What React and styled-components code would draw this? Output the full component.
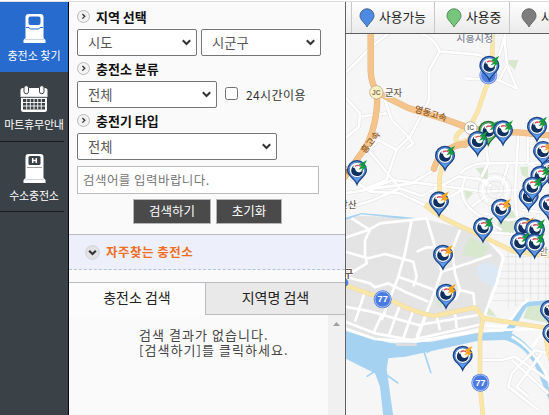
import React from "react";
import styled, { createGlobalStyle } from "styled-components";

const Global = createGlobalStyle`
  * { box-sizing: border-box; }
  body { margin: 0; overflow: hidden; font-family: "Noto Sans CJK KR", "Liberation Sans", sans-serif; }
`;

const Page = styled.div`
  display: grid;
  grid-template-columns: 69px 276px 204px;
  width: 549px;
  height: 415px;
  padding-top: 2px;
  background: linear-gradient(#fff 1px, #dcdcdc 1px, #dcdcdc 2px, #fafafa 2px);
`;

const Sidebar = styled.nav`
  background: #3b4247;
  border-right: 1px solid #07080f;
`;

const NavItem = styled.div`
  height: 70px;
  display: flex;
  flex-direction: column;
  align-items: center;
  padding-top: ${(p) => p.$top}px;
  background: ${(p) => (p.$active ? "#266bcd" : "transparent")};
  svg { display: block; }
  &::after {
    content: "";
    width: 64px;
    height: 1px;
    margin: auto auto 0 0;
    background: ${(p) => (p.$active ? "transparent" : "#171b1e")};
  }
`;

const NavLabel = styled.span`
  color: #fff;
  font-size: 11px;
  line-height: 16px;
  letter-spacing: ${(p) => p.$track || 0}px;
  margin-top: 3px;
  white-space: nowrap;
`;

const Panel = styled.main`
  display: flex;
  flex-direction: column;
  min-width: 0;
  background: #fafafa;
`;

const Form = styled.form`
  height: 232px;
  padding: 5px 0 0 8px;
`;

const Heading = styled.h3`
  display: flex;
  align-items: center;
  gap: 6px;
  height: 20px;
  margin: 0 0 2px;
  font-size: 13px;
  font-weight: 700;
  line-height: 20px;
  color: #111;
  svg { margin-top: -1px; }
`;

const Row = styled.div`
  display: flex;
  align-items: center;
  gap: 4px;
  height: 27px;
  margin-bottom: 3px;
`;

const SelectBox = styled.div`
  display: grid;
  grid-template-columns: 1fr 9px;
  align-items: center;
  width: ${(p) => p.$width}px;
  height: 27px;
  padding: 0 5px 0 10px;
  border: 1px solid #767676;
  border-radius: 2px;
  background: #fff;
  select {
    appearance: none;
    border: 0;
    padding: 0;
    width: 100%;
    height: 22px;
    background: none;
    font: 13.3px "Noto Sans CJK KR", sans-serif;
    color: #555;
  }
`;

const Check = styled.label`
  display: flex;
  align-items: center;
  gap: 8px;
  margin-left: 4px;
  font-size: 12px;
  letter-spacing: 0.4px;
  color: #333;
  input {
    appearance: none;
    width: 13px;
    height: 13px;
    margin: -2px 0 0;
    border: 1px solid #707070;
    border-radius: 2.5px;
    background: #fff;
  }
`;

const Keyword = styled.input`
  display: block;
  width: 242px;
  height: 28px;
  margin-top: 6px;
  padding: 0 6px 2px 5px;
  border: 1px solid #bbb;
  border-radius: 0;
  background: #fff;
  font: 12.5px "Noto Sans CJK KR", sans-serif;
  letter-spacing: 0.45px;
  &::placeholder { color: #757575; opacity: 1; }
`;

const Actions = styled.div`
  display: flex;
  gap: 5px;
  margin: 5px 0 0 56px;
`;

const Button = styled.button`
  width: ${(p) => p.$width}px;
  height: 25px;
  padding: 0 0 2px;
  border: 1px solid #b5b5b5;
  background: #4a4a4a;
  color: #fff;
  font: 12.5px "Noto Sans CJK KR", sans-serif;
`;

const Favorites = styled.div`
  display: flex;
  align-items: center;
  gap: 6px;
  height: 36px;
  padding-left: 16px;
  border-top: 1px solid #b7bdc8;
  border-bottom: 1px dashed #b4c4d8;
  background: #edf0fa;
  color: #ee6e24;
  font-size: 12.5px;
  font-weight: 700;
  letter-spacing: 0.5px;
  span { margin-top: -2px; }
`;

const Tabs = styled.div`
  display: grid;
  grid-template-columns: 137px 1fr;
  height: 33px;
  margin-top: 12px;
  border-top: 1px solid #b9bdc1;
`;

const Tab = styled.div`
  display: flex;
  justify-content: center;
  padding-top: 4px;
  font-size: 14px;
  line-height: 20px;
  color: #222;
  background: ${(p) => (p.$active ? "#fcfcfc" : "#e9e9e9")};
  border: solid #b9bdc1;
  border-width: ${(p) => (p.$active ? "0 1px 0 0" : "0 0 1px 0")};
`;

const Results = styled.div`
  display: flex;
  justify-content: space-between;
  flex: 1;
`;

const Empty = styled.p`
  margin: 12px 0 0 70px;
  font-size: 13px;
  line-height: 15px;
  letter-spacing: 1.05px;
  color: #444;
  white-space: nowrap;
`;

const Scrollbar = styled.div`
  width: 17px;
  padding: 7px 0 0 5px;
  background: #f0f0f0;
  svg { display: block; }
`;

const MapArea = styled.section`
  display: flex;
  flex-direction: column;
  border-left: 1px solid #626262;
  overflow: hidden;
`;

const Legend = styled.div`
  display: flex;
  flex: none;
  height: 32px;
  padding-left: 5px;
  overflow: hidden;
  border-bottom: 1px solid #5c5c5c;
  background: linear-gradient(#fefefe, #eaeaea);
`;

const LegendItem = styled.div`
  display: flex;
  flex: none;
  align-items: center;
  gap: 4px;
  width: ${(p) => p.$width}px;
  padding-left: ${(p) => p.$pad}px;
  border-left: 1px solid #c9c9c9;
  color: #222;
  font-size: 12.8px;
  white-space: nowrap;
  span { margin-top: -2px; }
`;

const MapCanvas = styled.svg`
  display: block;
  width: 203px;
  height: 381px;
  flex: none;
`;

const Chevron = () => (
  <svg width="9" height="7" viewBox="0 0 9 7" fill="none" stroke="#333" strokeWidth="2">
    <path d="M.8 1.3 4.5 5 8.2 1.3" />
  </svg>
);

const Bullet = ({ down }) => (
  <svg width={down ? 15 : 13} height={down ? 15 : 13} viewBox="0 0 13 13">
    <circle cx="6.5" cy="6.5" r="6" fill={down ? "#e2e2e4" : "#f3f3f3"} stroke={down ? "#cfd1d8" : "#aaa"} strokeWidth=".8" />
    {down
      ? <path d="M3.6 5 6.5 7.8 9.4 5" fill="none" stroke="#333" strokeWidth="1.9" />
      : <path d="M5.4 4 7.8 6.3 5.4 8.6" fill="none" stroke="#333" strokeWidth="1.3" />}
  </svg>
);

const Charger = ({ hydrogen }) => (
  <svg width="23" height="31" viewBox="0 0 23 31">
    <path d="M2.5 25V4Q2.5 1 5.5 1h12q3 0 3 3v21l2 2v3H.5v-3z" fill="#fff" />
    {hydrogen ? (
      <>
        <rect x="5.5" y="3" width="12" height="9" rx="1.5" fill="#3b4247" />
        <path d="M9.7 5v5M13.3 5v5M9.7 7.5h3.6" stroke="#fff" strokeWidth="1.5" />
        <path d="M4 14.5h15" stroke="#9da1a4" strokeWidth="1" />
      </>
    ) : (
      <>
        <rect x="5.5" y="3.5" width="12" height="8.5" rx="2" fill="#266bcd" />
        <path d="M3 14.5h3l1.3 1.5h8.4l1.3-1.5h3" fill="none" stroke="#266bcd" strokeWidth="1" />
      </>
    )}
    <path d="M2 26.5h19" stroke="#c2cbd6" strokeWidth=".8" />
  </svg>
);

const CalendarIcon = () => (
  <svg width="28" height="28" viewBox="0 0 28 28">
    <path d="M3 3h22q2.5 0 2.5 2.5V12H.5V5.500Q.5 3 3 3z" fill="#fff" />
    <path d="M1 12h26v12.500q0 2.500-2.500 2.500h-21Q1 27 1 24.500z" fill="#fff" />
    <path d="M1 12.300h26" stroke="#3b4247" strokeWidth="1" />
    <rect x="3" y="14" width="22" height="10.500" fill="#3b4247" />
    <path d="M3 17.500h22M3 21h22M6.700 14v10.500M10.300 14v10.500M14 14v10.500M17.700 14v10.500M21.300 14v10.500" stroke="#fff" strokeWidth=".9" />
    <rect x="4" y=".7" width="4.500" height="8" rx="2" fill="#fff" stroke="#3b4247" />
    <rect x="19.500" y=".7" width="4.500" height="8" rx="2" fill="#fff" stroke="#3b4247" />
  </svg>
);

const LegendPin = ({ fill, stroke }) => (
  <svg width="16" height="20" viewBox="0 0 16 20">
    <path d="M8 19C6 15 1 12 1 7.800a7 7 0 0 1 14 0C15 12 10 15 8 19z" fill={fill} stroke={stroke} />
  </svg>
);

const GREEN = "#159a3c";
const ORANGE = "#fba51b";

const STATIONS = [
  [433, 197, GREEN], [430, 392, GREEN, true], [474, 391, GREEN], [576, 380, GREEN],
  [398, 423, GREEN], [300, 467, GREEN], [36, 510, GREEN], [594, 453, ORANGE],
  [614, 510, GREEN], [586, 527, GREEN], [551, 588, GREEN], [562, 560, GREEN],
  [611, 613, GREEN], [282, 604, ORANGE], [468, 626, ORANGE], [414, 682, GREEN],
  [537, 682, ORANGE], [570, 688, GREEN], [525, 727, GREEN], [569, 730, GREEN],
  [294, 764, ORANGE], [303, 881, ORANGE], [353, 1067, ORANGE], [615, 930, GREEN], [622, 999, GREEN],
];

const StationPin = ({ x, y, bolt, busy }) => (
  <g transform={`translate(${x} ${y})`}>
    <path d="M0 43C-6 25-28 19-28 0a28 28 0 0 1 56 0C28 19 6 25 0 43z" fill={busy ? "#65b96f" : "#5c9aeb"} stroke={busy ? "#226e35" : "#1b4283"} strokeWidth="4" />
    <circle r="23" fill="#fff" stroke={busy ? "#2e7d42" : "#2a5aa8"} strokeWidth="2" />
    <path d="M-8-15C-22-6-21 17-1 18 12 19 19 9 17-1 13 8 3 9-2 4-7-1-3-8-11-6-12-10-10-13-8-15z" fill="#10305f" />
    <path d="M-7-13C1-19 12-15 13-7 8-13 0-13-6-9z" fill="#d8505c" />
    <path d="M30-30 5-16 13-12 4-1 17-5 11 6 29-10 21-13z" fill={bolt} />
  </g>
);

const RouteShield = ({ x, y }) => (
  <g transform={`translate(${x} ${y})`}>
    <circle r="27" fill="#4b7be0" />
    <circle r="23.500" fill="none" stroke="#dce7ff" strokeWidth="2" />
    <text y="9" textAnchor="middle" fontFamily="Liberation Sans, sans-serif" fontWeight="700" fontSize="28" fill="#fff">77</text>
  </g>
);

const HIGHWAYS = [
  "M77 90V210Q78 248 95 275Q100 315 88 370Q76 430 38 475L0 530",
  "M95 275Q140 300 190 324L300 358 375 385Q440 396 520 397L620 407",
  "M385 385Q385 420 360 434Q335 430 300 455Q276 475 267 506",
];

const YELLOW_ROADS = [
  "M442 90V190Q442 225 420 270L398 335 375 378Q334 394 332 418Q340 438 365 420",
  "M292 495 284 530V580L245 620Q290 657 370 689 440 722 505 754L620 768",
  "M0 855 60 877 150 906Q200 934 265 948L390 923 416 955 620 986",
  "M414 955 405 1010V1155L414 1250",
  "M600 985 608 1050 620 1090",
];

const MINOR_ROADS = [
  "M0 220 80 140 130 100M225 100Q265 110 284 154L400 164 455 190 482 100",
  "M284 154 253 210V300L195 410 155 448 124 540 65 565",
  "M120 300 140 360 185 405 205 430 185 445M0 290 45 340 42 380 0 415M45 350 125 340",
  "M0 580 110 562 200 550 300 490M0 525 75 575 165 580 245 618",
  "M155 450 100 420 70 450 165 565 230 588 340 530 420 540",
  "M60 570 145 540 230 550 420 575 520 570M165 565 85 600 20 620",
  "M478 115 486 195 515 265 460 240 360 235M486 195 460 245",
  "M345 520Q380 485 440 490L620 488M420 420 430 490 410 530",
  "M360 535Q330 600 400 645L470 690M350 570 300 600 310 630",
  "M520 400 515 490 510 575 520 700 500 760M550 400 548 488 620 520",
  "M420 540 440 560M490 490 470 560M395 530 430 560M460 590 460 650M470 590 505 630M420 590 380 620",
  "M420 640 490 660 560 650M380 690 470 700 600 710M530 630 620 640",
];

const URBAN_ROADS = [
  "M0 713 70 690 105 670 245 655M20 655 75 690M75 690 60 720 60 770",
  "M0 755 70 775 120 762 205 785 215 830 205 860M215 755 245 742 265 742",
  "M200 660 180 760 160 830 110 960M245 655 270 740 290 815 260 900 215 1010M290 815 370 790 440 765",
  "M0 830 65 790 62 770M0 830 75 850 90 862 130 850 180 875 250 905",
  "M160 830 270 870M0 920 80 935 220 975 400 945M0 965 90 1000 200 1020 400 975 480 980",
  "M60 875 30 965M110 945 85 1000M165 915 130 1010M205 930 175 1015M245 940 215 1020",
  "M320 735 330 820 345 870 330 900M345 870 385 880 390 925",
  "M345 690 325 740M430 720 475 770 455 850 415 955",
  "M275 950 285 990M330 940 335 985",
];

const MapDrawing = () => (
  <MapCanvas viewBox="3 102 609 1143">
    <rect width="620" height="1250" fill="#f6f6f6" />
    <path d="M0 663 40 647 230 655 370 690 450 730 472 780 430 900 415 980 210 1025 90 1018 0 986z" fill="#e4e4e5" />
    <g fill="#d7e8cf">
      <path d="M392 505 430 500 427 550zM460 650 500 625 520 665 505 700 455 700zM350 765 375 710 435 740 410 775zM550 910 612 900V970L535 955zM525 500 550 500 548 535 530 525zM355 565 385 580 365 600zM430 920 455 950 425 945zM480 180 520 180 510 210zM270 905 295 890 288 925z" />
    </g>
    <path d="M395 800 425 785 460 800 450 865 405 840z" fill="#dce8f3" />
    <g fill="#a6d2f1">
      <path d="M0 992 70 1014 140 1030 260 1025 400 998 475 995 535 907 612 900V912L545 920 500 1000Q590 1050 612 1165V1200L580 1120Q550 1040 480 1020L400 1022 250 1055 180 1070 130 1075 125 1108 145 1250H115L105 1160 90 1120 50 1100 0 1075z" />
      <path d="M0 653 50 639 175 650 220 655 170 656 50 643 0 661z" />
    </g>
    <g fill="none" stroke="#a6d2f1" strokeWidth="5">
      <path d="M95 1110 65 1130M125 1125 160 1150M237 1055 258 1120M245 1058 265 1045" />
    </g>
    <path d="M150 1030H215V1038H155zM230 1010H270V1018H230z" fill="#dedede" />
    <g fill="none" stroke="#e0e0e0" strokeWidth="11" strokeLinejoin="round">
      {MINOR_ROADS.map((d) => <path key={d} d={d} />)}
      <path d="M410 1080H470L510 1070 610 1140M610 1060 570 1050 500 1120 490 1160 580 1230M500 1080 610 1180M590 1060 515 1160 550 1190" />
    </g>
    <g fill="none" stroke="#fff" strokeWidth="8" strokeLinejoin="round">
      {MINOR_ROADS.map((d) => <path key={d} d={d} />)}
      <path d="M410 1080H470L510 1070 610 1140M610 1060 570 1050 500 1120 490 1160 580 1230M500 1080 610 1180M590 1060 515 1160 550 1190" />
    </g>
    <g fill="none" stroke="#dfdfdf" strokeWidth="2">
      <path d="M472 770H612M472 792H612M465 814H612M463 836H612M455 858H612M448 880H612M443 902H540M490 745V925M512 760V920M534 765V905M557 765V900M580 760V900M602 765V900" />
      <circle cx="450" cy="570" r="26" /><circle cx="450" cy="570" r="50" /><circle cx="450" cy="570" r="13" />
    </g>
    <g fill="none" stroke="#fff" strokeWidth="8" strokeLinejoin="round">
      {URBAN_ROADS.map((d) => <path key={d} d={d} />)}
      <path d="M0 985 90 1017 210 1025 400 993 475 990 530 915 550 900" />
      <path d="M500 1010Q575 1050 620 1160M470 990 600 985 560 1045" />
      <circle cx="450" cy="570" r="38" strokeWidth="6" />
    </g>
    <g fill="none" stroke="#efdba0" strokeWidth="14">
      {YELLOW_ROADS.map((d) => <path key={d} d={d} />)}
    </g>
    <g fill="none" stroke="#fbe6aa" strokeWidth="11">
      {YELLOW_ROADS.map((d) => <path key={d} d={d} />)}
    </g>
    <g fill="none" stroke="#e3b47c" strokeWidth="19" strokeLinecap="round">
      {HIGHWAYS.map((d) => <path key={d} d={d} />)}
    </g>
    <g fill="none" stroke="#f5c48d" strokeWidth="16" strokeLinecap="round">
      {HIGHWAYS.map((d) => <path key={d} d={d} />)}
    </g>
    <g fontFamily="Noto Sans CJK KR, sans-serif" fontSize="28" fontWeight="500" fill="#68584f" stroke="#fff" strokeWidth="4" paintOrder="stroke">
      <text x="334" y="127" fill="#7c8492" fontSize="30">시흥시청</text>
      <text x="120" y="288">군자</text>
      <text x="-17" y="625">안산</text>
      <text x="-6" y="834" fontSize="34">구</text>
      <text x="583" y="765" fill="#8b857d">안산</text>
      <g stroke="none" fill="#8e5924" fontSize="27">
        <text x="207" y="335" transform="rotate(17 207 335)">영동고속</text>
        <text x="61" y="462" transform="rotate(-52 61 462)">흥고속</text>
        <text x="8" y="528" transform="rotate(-52 8 528)">동</text>
      </g>
    </g>
    <g stroke="#a49b87" strokeWidth="2">
      <circle cx="94" cy="277" r="20" fill="#fff1c2" />
      <circle cx="377" cy="384" r="19" fill="#fff" />
    </g>
    <g fontFamily="Liberation Sans, sans-serif" fontSize="20" fontWeight="700" fill="#777064" textAnchor="middle">
      <text x="94" y="284">JC</text>
      <text x="377" y="391">IC</text>
    </g>
    <circle cx="430" cy="226" r="27" fill="#6f93e6" />
    <circle cx="430" cy="226" r="23" fill="#4f7ee2" stroke="#dce7ff" strokeWidth="2" />
    <RouteShield x={113} y={898} />
    <RouteShield x={406} y={1148} />
    <circle cx="-3" cy="848" r="13" fill="#527ddd" />
    {STATIONS.map(([x, y, bolt, busy]) => <StationPin key={`${x}-${y}`} x={x} y={y} bolt={bolt} busy={busy} />)}
  </MapCanvas>
);

const Select = ({ width, value }) => (
  <SelectBox $width={width}>
    <select defaultValue={value}><option>{value}</option></select>
    <Chevron />
  </SelectBox>
);

export default function App() {
  return (
    <>
      <Global />
      <Page>
        <Sidebar>
          <NavItem $active $top={11}><Charger /><NavLabel>충전소 찾기</NavLabel></NavItem>
          <NavItem $top={13}><CalendarIcon /><NavLabel $track={-0.2}>마트휴무안내</NavLabel></NavItem>
          <NavItem $top={11}><Charger hydrogen /><NavLabel $track={-0.2}>수소충전소</NavLabel></NavItem>
        </Sidebar>
        <Panel>
          <Form>
            <Heading><Bullet />지역 선택</Heading>
            <Row><Select width={120} value="시도" /><Select width={120} value="시군구" /></Row>
            <Heading><Bullet />충전소 분류</Heading>
            <Row><Select width={140} value="전체" /><Check><input type="checkbox" />24시간이용</Check></Row>
            <Heading><Bullet />충전기 타입</Heading>
            <Row><Select width={200} value="전체" /></Row>
            <Keyword placeholder="검색어를 입력바랍니다." />
            <Actions><Button type="button" $width={78}>검색하기</Button><Button type="button" $width={66}>초기화</Button></Actions>
          </Form>
          <Favorites><Bullet down /><span>자주찾는 충전소</span></Favorites>
          <Tabs><Tab $active>충전소 검색</Tab><Tab>지역명 검색</Tab></Tabs>
          <Results>
            <Empty>검색 결과가 없습니다.<br />[검색하기]를 클릭하세요.</Empty>
            <Scrollbar><svg width="7" height="5"><path d="M0 4 3.500 0 7 4z" fill="#a0a0a0" /></svg></Scrollbar>
          </Results>
        </Panel>
        <MapArea>
          <Legend>
            <LegendItem $width={83} $pad={7}><LegendPin fill="#4e8ae2" stroke="#45658f" /><span>사용가능</span></LegendItem>
            <LegendItem $width={75} $pad={11}><LegendPin fill="#76c77b" stroke="#568b59" /><span>사용중</span></LegendItem>
            <LegendItem $width={90} $pad={11}><LegendPin fill="#7d7d7d" stroke="#686868" /><span>사용불가</span></LegendItem>
          </Legend>
          <MapDrawing />
        </MapArea>
      </Page>
    </>
  );
}
